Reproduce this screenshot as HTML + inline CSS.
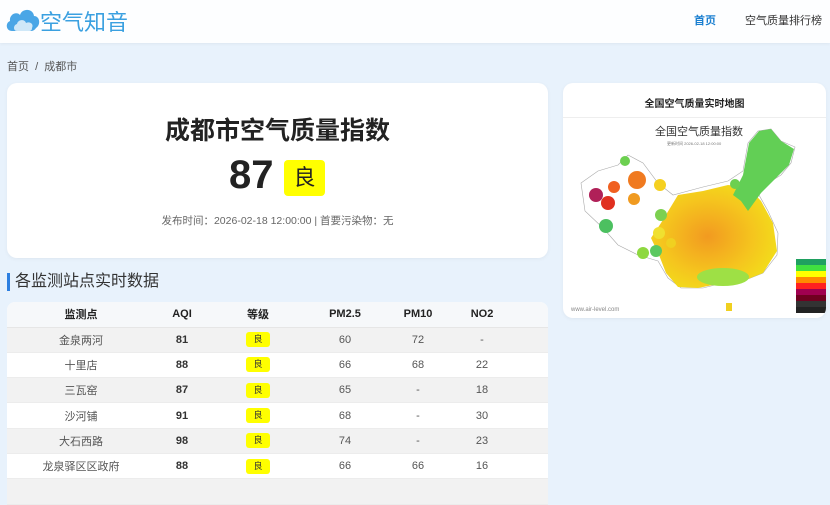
<!DOCTYPE html>
<html><head><meta charset="utf-8"><style>
*{margin:0;padding:0;box-sizing:border-box}
body{width:830px;height:482px;overflow:hidden;background:#e8f2fc;font-family:"Liberation Sans","Noto Sans CJK SC",sans-serif;color:#333;position:relative}
.hdr{position:absolute;left:0;top:0;width:830px;height:43px;background:#fdfeff;box-shadow:0 1px 3px rgba(0,0,0,.05)}
.logo{position:absolute;left:40px;top:5px;font-size:22px;color:#3aa0e0}
.nav1{position:absolute;left:694px;top:12px;font-size:11px;color:#1a7fd0;font-weight:bold}
.nav2{position:absolute;left:745px;top:12px;font-size:11px;color:#333}
.bc{position:absolute;left:7px;top:58px;font-size:11px;color:#555}
.card{position:absolute;background:#fff;border-radius:10px;box-shadow:0 1px 4px rgba(0,0,0,.05)}
.t1{position:absolute;left:0;width:541px;top:28px;text-align:center;font-size:25px;font-weight:bold;color:#222}
.big{position:absolute;left:222px;top:70px;font-size:40px;font-weight:bold;color:#222}
.badge{position:absolute;left:277px;top:77px;width:41px;height:36px;background:#ffff00;border-radius:4px;font-size:22px;text-align:center;line-height:36px;color:#222}
.sub{position:absolute;left:0;width:541px;top:130px;text-align:center;font-size:10.5px;color:#666}
.sec{position:absolute;left:7px;top:273px;font-size:16px;color:#333;border-left:3px solid #2d7fe0;padding-left:5px;line-height:18px}
table{position:absolute;left:7px;top:302px;width:541px;border-collapse:collapse;table-layout:fixed;background:#fff;border-radius:8px 8px 0 0;overflow:hidden;font-size:11px}
th{height:25px;background:#f6f8fa;font-weight:bold;color:#222;border-bottom:1px solid #e6e6e6}
td{height:25.3px;text-align:center;color:#555;border-bottom:1px solid #ececec}
tr:nth-child(even) td{background:#f2f2f2}
td.b{font-weight:bold;color:#333}
.lv{display:inline-block;width:24px;height:15px;background:#ffff00;border-radius:3px;font-size:9px;line-height:15px;color:#333}
</style></head><body>
<div class="hdr">
<svg style="position:absolute;left:5px;top:5px" width="36" height="28" viewBox="0 0 36 28"><path d="M7 26 C1 26 0 18 5 16 C4 9 12 6 15 10 C17 3 28 3 29 11 C35 11 36 20 31 23 C29 26 27 26 25 26 Z" fill="#4aa6e6"/><path d="M12 26 C8 26 8 20 12 19 C13 14 20 14 21 18 C25 16 29 19 27 23 C27 26 25 26 23 26Z" fill="#cfe8f8"/></svg>
<div class="logo">空气知音</div>
<div class="nav1">首页</div><div class="nav2">空气质量排行榜</div>
</div>
<div class="bc">首页 &nbsp;/&nbsp; 成都市</div>
<div class="card" style="left:7px;top:83px;width:541px;height:175px">
<div class="t1">成都市空气质量指数</div>
<div class="big">87</div>
<div class="badge">良</div>
<div class="sub">发布时间：2026-02-18 12:00:00 | 首要污染物：无</div>
</div>
<div class="card" style="left:563px;top:83px;width:263px;height:235px;overflow:hidden">
<div style="position:absolute;top:12px;width:263px;text-align:center;font-size:10px;font-weight:bold;color:#222">全国空气质量实时地图</div>
<div style="position:absolute;top:34px;left:0;width:263px;border-top:1px solid #eee"></div>
<svg style="position:absolute;left:0;top:0" width="263" height="235" viewBox="0 0 263 235">
<defs><radialGradient id="g" cx="0.45" cy="0.5" r="0.6"><stop offset="0" stop-color="#f29a20"/><stop offset="0.6" stop-color="#f5c51e"/><stop offset="1" stop-color="#f2e01a"/></radialGradient></defs>
<path d="M18 100 L35 88 L55 82 L65 72 L80 80 L95 100 L110 112 L140 104 L165 98 L180 88 L185 60 L195 48 L208 46 L218 58 L232 64 L228 80 L218 92 L205 100 L196 112 L205 128 L215 150 L214 172 L200 190 L180 198 L160 200 L140 205 L118 205 L105 195 L95 178 L75 172 L55 162 L40 145 L22 128 Z" fill="#fff" stroke="#aaa" stroke-width=".6"/>
<path d="M98 140 L115 112 L140 108 L165 102 L185 104 L198 118 L210 140 L214 168 L200 190 L180 198 L160 200 L135 205 L115 204 L103 190 L96 172 L88 155 Z" fill="url(#g)"/>
<path d="M180 92 L186 60 L196 48 L208 46 L218 58 L231 66 L226 82 L212 96 L198 110 L185 128 L178 118 L170 112 Z" fill="#62cf55"/>
<ellipse cx="160" cy="194" rx="26" ry="9" fill="#9ee045"/>
<circle cx="33" cy="112" r="7" fill="#b02058"/><circle cx="45" cy="120" r="7" fill="#e03020"/><circle cx="51" cy="104" r="6" fill="#f06020"/><circle cx="74" cy="97" r="9" fill="#f07a20"/><circle cx="71" cy="116" r="6" fill="#f09a20"/><circle cx="97" cy="102" r="6" fill="#f5d020"/><circle cx="43" cy="143" r="7" fill="#4cc060"/><circle cx="98" cy="132" r="6" fill="#7cd050"/><circle cx="96" cy="150" r="6" fill="#f0e030"/><circle cx="80" cy="170" r="6" fill="#8ed840"/><circle cx="93" cy="168" r="6" fill="#5cc860"/><circle cx="108" cy="160" r="5" fill="#f0d020"/><circle cx="62" cy="78" r="5" fill="#6cd050"/><circle cx="172" cy="101" r="5" fill="#6cd050"/>
<text x="92" y="52" font-size="11" fill="#333" font-family="Liberation Sans,Noto Sans CJK SC,sans-serif">全国空气质量指数</text>
<text x="104" y="62" font-size="4" fill="#777">更新时间 2026-02-18 12:00:00</text>
<path d="M163 220 h6 v8 h-6z" fill="#f0d020"/>
<g><rect x="233" y="176" width="30" height="6" fill="#1fa060"/><rect x="233" y="182" width="30" height="6" fill="#40e040"/><rect x="233" y="188" width="30" height="6" fill="#ffff00"/><rect x="233" y="194" width="30" height="6" fill="#ff8a00"/><rect x="233" y="200" width="30" height="6" fill="#ff2020"/><rect x="233" y="206" width="30" height="6" fill="#a00050"/><rect x="233" y="212" width="30" height="6" fill="#700020"/><rect x="233" y="218" width="30" height="6" fill="#333"/><rect x="233" y="224" width="30" height="6" fill="#222"/></g>
<text x="8" y="228" font-size="6" fill="#888" font-family="Liberation Sans">www.air-level.com</text>
</svg>
</div>
<div class="sec">各监测站点实时数据</div>
<table>
<colgroup><col style="width:148px"><col style="width:54px"><col style="width:98px"><col style="width:76px"><col style="width:70px"><col style="width:58px"><col></colgroup>
<tr><th>监测点</th><th>AQI</th><th>等级</th><th>PM2.5</th><th>PM10</th><th>NO2</th><th></th></tr>
<tr><td>金泉两河</td><td class="b">81</td><td><span class="lv">良</span></td><td>60</td><td>72</td><td>-</td><td></td></tr>
<tr><td>十里店</td><td class="b">88</td><td><span class="lv">良</span></td><td>66</td><td>68</td><td>22</td><td></td></tr>
<tr><td>三瓦窑</td><td class="b">87</td><td><span class="lv">良</span></td><td>65</td><td>-</td><td>18</td><td></td></tr>
<tr><td>沙河铺</td><td class="b">91</td><td><span class="lv">良</span></td><td>68</td><td>-</td><td>30</td><td></td></tr>
<tr><td>大石西路</td><td class="b">98</td><td><span class="lv">良</span></td><td>74</td><td>-</td><td>23</td><td></td></tr>
<tr><td>龙泉驿区区政府</td><td class="b">88</td><td><span class="lv">良</span></td><td>66</td><td>66</td><td>16</td><td></td></tr>
<tr><td>&nbsp;</td><td></td><td></td><td></td><td></td><td></td><td></td></tr>
</table>
</body></html>
